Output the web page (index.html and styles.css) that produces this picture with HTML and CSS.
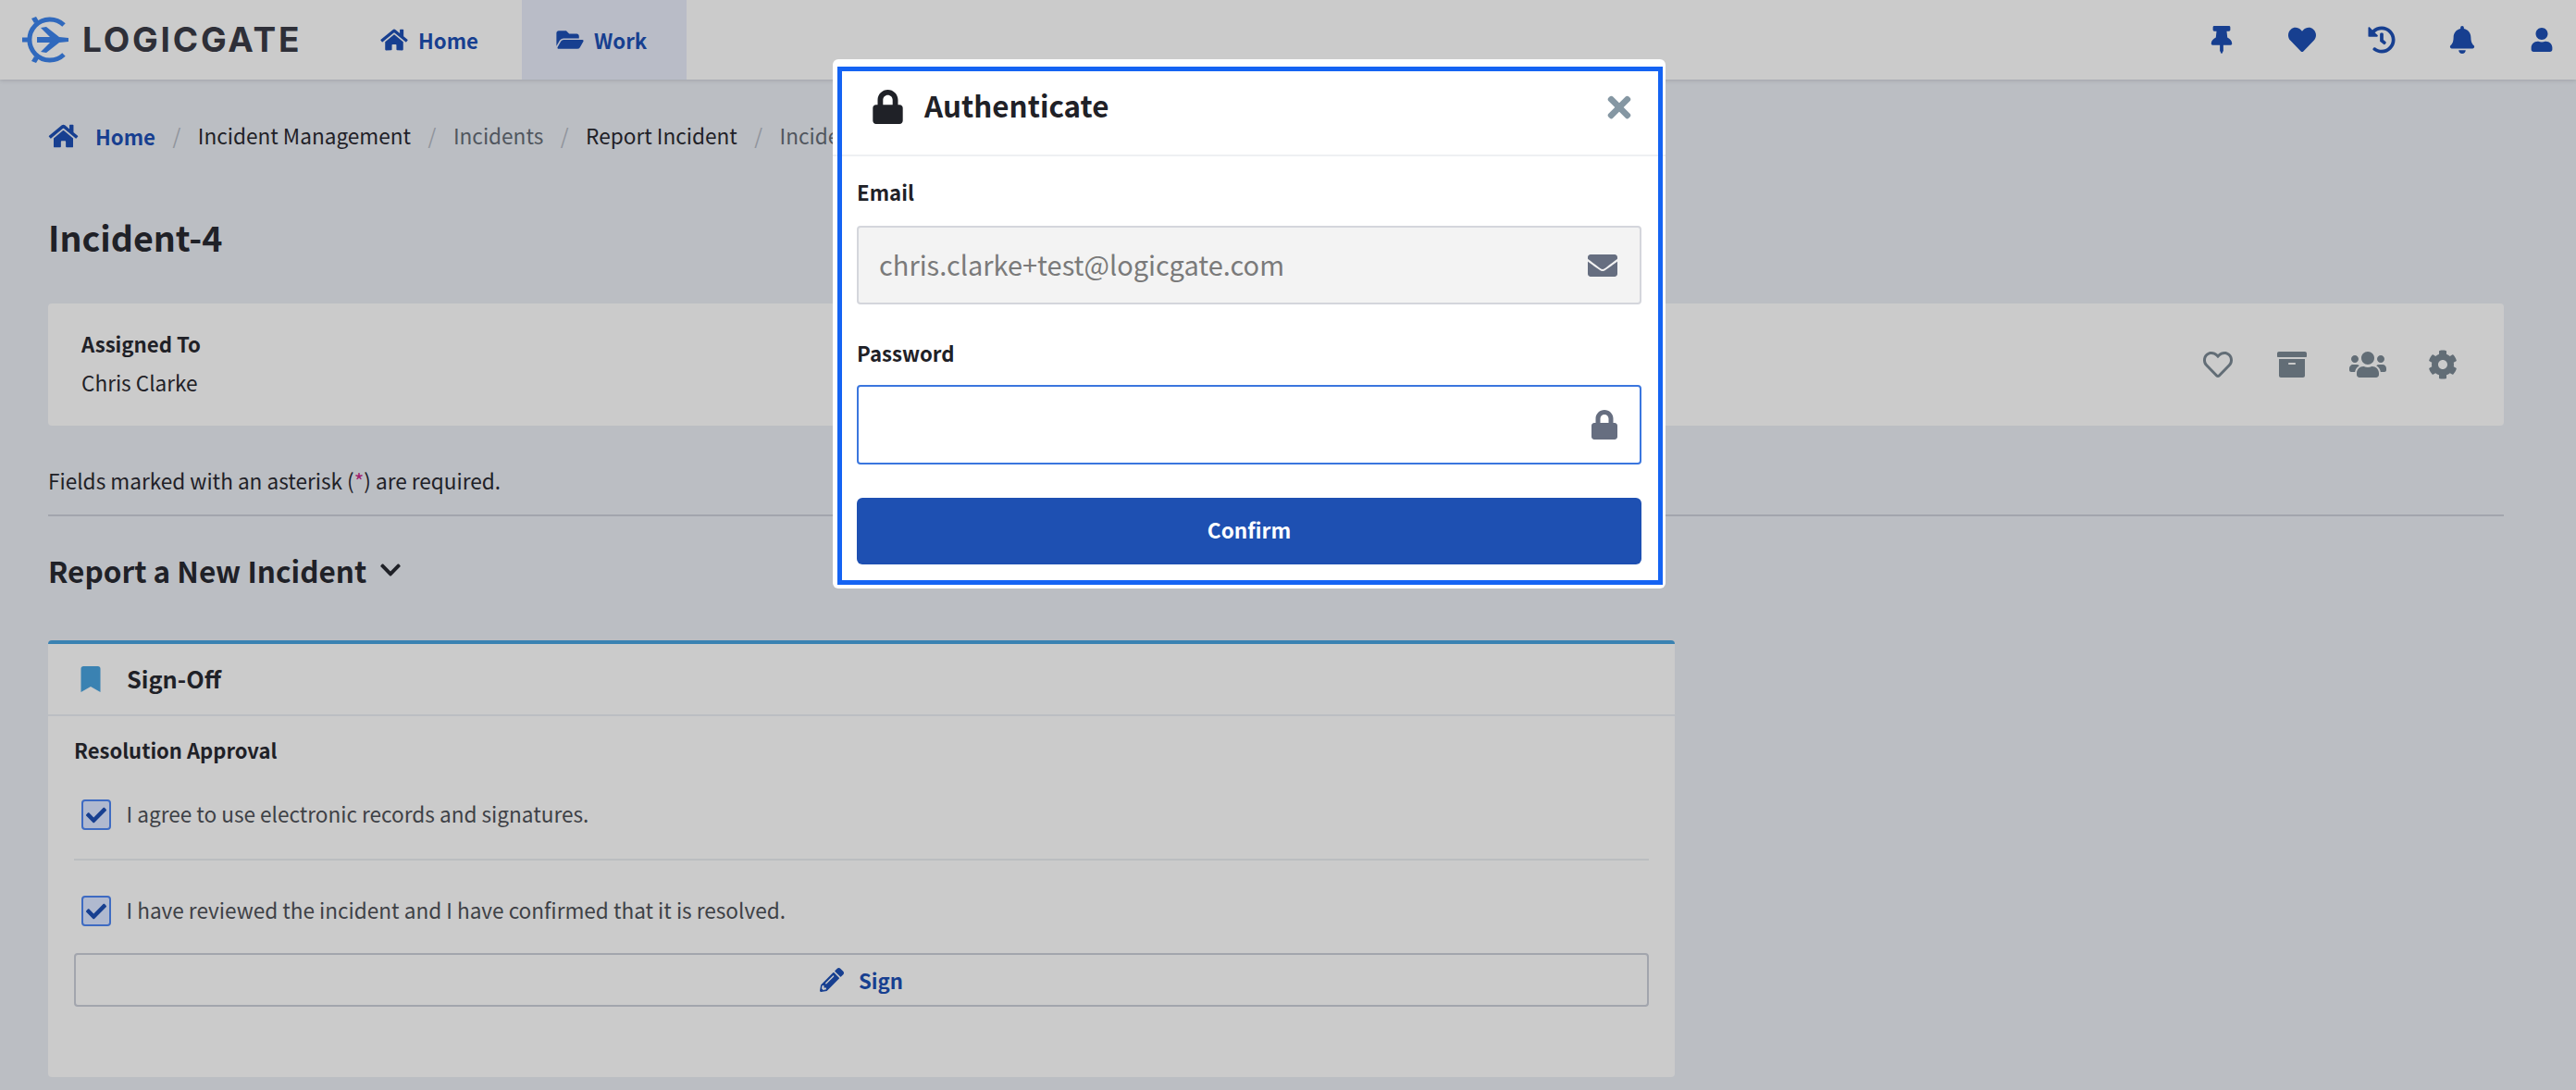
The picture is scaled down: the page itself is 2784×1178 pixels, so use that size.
FILE: index.html
```html
<!DOCTYPE html>
<html lang="en">
<head>
<meta charset="utf-8">
<title>Authenticate</title>
<link rel="stylesheet" href="styles.css">
</head>
<body>
<svg class="defs" aria-hidden="true">
  <symbol id="i-home" viewBox="0 0 576 512"><path d="M280.37 148.26L96 300.11V464a16 16 0 0 0 16 16l112.06-.29a16 16 0 0 0 15.92-16V368a16 16 0 0 1 16-16h64a16 16 0 0 1 16 16v95.64a16 16 0 0 0 16 16.05L464 480a16 16 0 0 0 16-16V300L295.67 148.26a12.19 12.19 0 0 0-15.3 0zM571.6 251.47L488 182.56V44.05a12 12 0 0 0-12-12h-56a12 12 0 0 0-12 12v72.61L318.47 43a48 48 0 0 0-61 0L4.34 251.47a12 12 0 0 0-1.6 16.9l25.5 31A12 12 0 0 0 45.15 301l235.22-193.74a12.19 12.19 0 0 1 15.3 0L530.9 301a12 12 0 0 0 16.9-1.6l25.5-31a12 12 0 0 0-1.7-16.93z"/></symbol>
  <symbol id="i-folder" viewBox="0 0 576 512"><path d="M572.694 292.093L500.27 416.248A63.997 63.997 0 0 1 444.989 448H45.025c-18.523 0-30.064-20.093-20.731-36.093l72.424-124.155A64 64 0 0 1 152 256h399.964c18.523 0 30.064 20.093 20.73 36.093zM152 224h328v-48c0-26.51-21.49-48-48-48H272l-64-64H48C21.49 64 0 85.49 0 112v278.046l69.077-118.418C86.214 242.25 117.989 224 152 224z"/></symbol>
  <symbol id="i-pin" viewBox="0 0 384 512"><path d="M298.028 214.267L285.793 96H328c13.255 0 24-10.745 24-24V24c0-13.255-10.745-24-24-24H56C42.745 0 32 10.745 32 24v48c0 13.255 10.745 24 24 24h42.207L85.972 214.267C37.465 236.82 0 277.261 0 328c0 13.255 10.745 24 24 24h136v104.007c0 1.242.289 2.467.845 3.578l24 48c2.941 5.882 11.364 5.893 14.311 0l24-48a8.008 8.008 0 0 0 .845-3.578V352h136c13.255 0 24-10.745 24-24-.001-51.183-37.983-91.42-85.973-113.733z"/></symbol>
  <symbol id="i-heart" viewBox="0 0 512 512"><path d="M462.3 62.6C407.5 15.9 326 24.3 275.7 76.2L256 96.5l-19.7-20.3C186.1 24.3 104.5 15.9 49.7 62.6c-62.8 53.6-66.1 149.8-9.9 207.9l193.5 199.8c12.5 12.9 32.8 12.9 45.3 0l193.5-199.8c56.3-58.1 53-154.3-9.8-207.9z"/></symbol>
  <symbol id="i-heart-o" viewBox="0 0 512 512"><path d="M458.4 64.3C400.6 15.7 311.3 23 256 79.3 200.7 23 111.4 15.6 53.6 64.3-21.6 127.6-10.6 230.8 43 285.5l175.4 178.7c10 10.2 23.4 15.9 37.6 15.9 14.3 0 27.6-5.6 37.6-15.8L469 285.6c53.5-54.7 64.7-157.9-10.6-221.3zm-23.6 187.5L259.4 430.5c-2.4 2.4-4.4 2.4-6.8 0L77.2 251.8c-36.5-37.2-43.9-107.6 7.3-150.7 38.9-32.7 98.9-27.8 136.5 10.5l35 35.7 35-35.7c37.8-38.5 97.8-43.2 136.5-10.6 51.1 43.1 43.5 113.9 7.3 150.8z"/></symbol>
  <symbol id="i-history" viewBox="0 0 512 512"><path d="M504 255.531c.253 136.64-111.18 248.372-247.82 248.468-59.015.042-113.223-20.53-155.822-54.911-11.077-8.94-11.905-25.541-1.839-35.607l11.267-11.267c8.609-8.609 22.353-9.551 31.891-1.984C173.062 425.135 212.781 440 256 440c101.705 0 184-82.311 184-184 0-101.705-82.311-184-184-184-48.814 0-93.149 18.969-126.068 49.932l50.754 50.754c10.08 10.08 2.941 27.314-11.313 27.314H24c-8.837 0-16-7.163-16-16V38.627c0-14.254 17.234-21.393 27.314-11.314l49.372 49.372C129.209 34.136 189.552 8 256 8c136.81 0 247.747 110.78 248 247.531zm-180.912 78.784l9.823-12.63c8.138-10.463 6.253-25.542-4.21-33.679L288 256.349V152c0-13.255-10.745-24-24-24h-16c-13.255 0-24 10.745-24 24v135.651l65.409 50.874c10.463 8.137 25.541 6.253 33.679-4.21z"/></symbol>
  <symbol id="i-bell" viewBox="0 0 448 512"><path d="M224 512c35.32 0 63.97-28.65 63.97-64H160.03c0 35.35 28.65 64 63.97 64zm215.39-149.71c-19.32-20.76-55.47-51.99-55.47-154.29 0-77.7-54.48-139.9-127.94-155.16V32c0-17.67-14.32-32-31.98-32s-31.98 14.33-31.98 32v20.84C118.56 68.1 64.08 130.3 64.08 208c0 102.3-36.15 133.53-55.47 154.29-6 6.45-8.66 14.16-8.61 21.71.11 16.4 12.98 32 32.1 32h383.8c19.12 0 32-15.6 32.1-32 .05-7.55-2.61-15.27-8.61-21.71z"/></symbol>
  <symbol id="i-user" viewBox="0 0 448 512"><path d="M224 256c70.7 0 128-57.3 128-128S294.7 0 224 0 96 57.3 96 128s57.3 128 128 128zm89.6 32h-16.7c-22.2 10.2-46.9 16-72.9 16s-50.6-5.8-72.9-16h-16.7C60.2 288 0 348.2 0 422.4V464c0 26.5 21.5 48 48 48h352c26.5 0 48-21.5 48-48v-41.6c0-74.2-60.2-134.4-134.4-134.4z"/></symbol>
  <symbol id="i-archive" viewBox="0 0 512 512"><path d="M32 448c0 17.7 14.3 32 32 32h384c17.7 0 32-14.3 32-32V160H32v288zm160-212c0-6.6 5.4-12 12-12h104c6.6 0 12 5.4 12 12v8c0 6.6-5.4 12-12 12H204c-6.6 0-12-5.4-12-12v-8zM480 32H32C14.3 32 0 46.3 0 64v48c0 8.8 7.2 16 16 16h480c8.8 0 16-7.2 16-16V64c0-17.7-14.3-32-32-32z"/></symbol>
  <symbol id="i-users" viewBox="0 0 640 512"><path d="M96 224c35.3 0 64-28.7 64-64s-28.7-64-64-64-64 28.7-64 64 28.7 64 64 64zm448 0c35.3 0 64-28.7 64-64s-28.7-64-64-64-64 28.7-64 64 28.7 64 64 64zm32 32h-64c-17.6 0-33.5 7.1-45.1 18.6 40.3 22.1 68.9 62 75.1 109.4h66c17.7 0 32-14.3 32-32v-32c0-35.3-28.7-64-64-64zm-256 0c61.9 0 112-50.1 112-112S381.9 32 320 32 208 82.1 208 144s50.1 112 112 112zm76.8 32h-8.3c-20.8 10-43.9 16-68.5 16s-47.6-6-68.5-16h-8.3C179.6 288 128 339.6 128 403.2V432c0 26.5 21.5 48 48 48h288c26.5 0 48-21.5 48-48v-28.8c0-63.6-51.6-115.2-115.2-115.2zm-223.7-13.4C161.5 263.1 145.6 256 128 256H64c-35.3 0-64 28.7-64 64v32c0 17.7 14.3 32 32 32h65.9c6.3-47.4 34.9-87.3 75.2-109.4z"/></symbol>
  <symbol id="i-cog" viewBox="0 0 512 512"><path d="M487.4 315.7l-42.6-24.6c4.3-23.2 4.3-47 0-70.2l42.6-24.6c4.9-2.8 7.1-8.6 5.5-14-11.1-35.6-30-67.8-54.7-94.6-3.8-4.1-10-5.1-14.8-2.3L380.8 110c-17.9-15.4-38.5-27.3-60.8-35.1V25.8c0-5.6-3.9-10.5-9.4-11.7-36.7-8.2-74.3-7.8-109.2 0-5.5 1.2-9.4 6.1-9.4 11.7V75c-22.2 7.9-42.8 19.8-60.8 35.1L88.7 85.5c-4.9-2.8-11-1.9-14.8 2.3-24.7 26.7-43.6 58.9-54.7 94.6-1.7 5.4.6 11.2 5.5 14L67.3 221c-4.3 23.2-4.3 47 0 70.2l-42.6 24.6c-4.9 2.8-7.1 8.6-5.5 14 11.1 35.6 30 67.8 54.7 94.6 3.8 4.1 10 5.1 14.8 2.3l42.6-24.6c17.9 15.4 38.5 27.3 60.8 35.1v49.2c0 5.6 3.9 10.5 9.4 11.7 36.7 8.2 74.3 7.8 109.2 0 5.5-1.2 9.4-6.1 9.4-11.7v-49.2c22.2-7.9 42.8-19.8 60.8-35.1l42.6 24.6c4.9 2.8 11 1.9 14.8-2.3 24.7-26.7 43.6-58.9 54.7-94.6 1.5-5.5-.7-11.3-5.6-14.1zM256 336c-44.1 0-80-35.9-80-80s35.9-80 80-80 80 35.9 80 80-35.9 80-80 80z"/></symbol>
  <symbol id="i-lock" viewBox="0 0 448 512"><path d="M400 224h-24v-72C376 68.2 307.8 0 224 0S72 68.2 72 152v72H48c-26.5 0-48 21.5-48 48v192c0 26.5 21.5 48 48 48h352c26.5 0 48-21.5 48-48V272c0-26.5-21.5-48-48-48zm-104 0H152v-72c0-39.7 32.3-72 72-72s72 32.3 72 72v72z"/></symbol>
  <symbol id="i-envelope" viewBox="0 0 512 512"><path d="M502.3 190.8c3.9-3.1 9.7-.2 9.7 4.7V400c0 26.5-21.5 48-48 48H48c-26.5 0-48-21.5-48-48V195.6c0-5 5.7-7.8 9.7-4.7 22.4 17.4 52.1 39.5 154.1 113.6 21.1 15.4 56.7 47.8 92.2 47.6 35.7.3 72-32.8 92.3-47.6 102-74.1 131.6-96.3 154-113.7zM256 320c23.2.4 56.6-29.2 73.4-41.4 132.7-96.3 142.8-104.7 173.4-128.7 5.8-4.5 9.2-11.5 9.2-18.9v-19c0-26.5-21.5-48-48-48H48C21.5 64 0 85.5 0 112v19c0 7.4 3.4 14.3 9.2 18.9 30.6 23.9 40.7 32.4 173.4 128.7 16.8 12.2 50.2 41.8 73.4 41.4z"/></symbol>
  <symbol id="i-times" viewBox="0 0 352 512"><path d="M242.72 256l100.07-100.07c12.28-12.28 12.28-32.19 0-44.48l-22.24-22.24c-12.28-12.28-32.19-12.28-44.48 0L176 189.28 75.93 89.21c-12.28-12.28-32.19-12.28-44.48 0L9.21 111.45c-12.28 12.28-12.28 32.19 0 44.48L109.28 256 9.21 356.07c-12.28 12.28-12.28 32.19 0 44.48l22.24 22.24c12.28 12.28 32.2 12.28 44.48 0L176 322.72l100.07 100.07c12.28 12.28 32.2 12.28 44.48 0l22.24-22.24c12.28-12.28 12.28-32.19 0-44.48L242.72 256z"/></symbol>
  <symbol id="i-chevron" viewBox="0 0 448 512"><path d="M207.029 381.476L12.686 187.132c-9.373-9.373-9.373-24.569 0-33.941l22.667-22.667c9.357-9.357 24.522-9.375 33.901-.04L224 284.505l154.745-154.021c9.379-9.335 24.544-9.317 33.901.04l22.667 22.667c9.373 9.373 9.373 24.569 0 33.941L240.971 381.476c-9.373 9.372-24.569 9.372-33.942 0z"/></symbol>
  <symbol id="i-bookmark" viewBox="0 0 384 512"><path d="M0 512V48C0 21.49 21.49 0 48 0h288c26.51 0 48 21.49 48 48v464L192 400 0 512z"/></symbol>
  <symbol id="i-check" viewBox="0 0 512 512"><path d="M173.898 439.404l-166.4-166.4c-9.997-9.997-9.997-26.206 0-36.204l36.203-36.204c9.997-9.998 26.207-9.998 36.204 0L192 312.69 432.095 72.596c9.997-9.997 26.207-9.997 36.204 0l36.203 36.204c9.997 9.997 9.997 26.206 0 36.204l-294.4 294.401c-9.998 9.997-26.207 9.997-36.204-.001z"/></symbol>
  <symbol id="i-pencil" viewBox="0 0 512 512"><path d="M497.9 142.1l-46.1 46.1c-4.7 4.7-12.3 4.7-17 0l-111-111c-4.7-4.7-4.7-12.3 0-17l46.1-46.1c18.7-18.7 49.1-18.7 67.9 0l60.1 60.1c18.8 18.7 18.8 49.1 0 67.9zM284.2 99.8L21.6 362.4.4 483.9c-2.9 16.4 11.4 30.6 27.8 27.8l121.5-21.3 262.6-262.6c4.7-4.7 4.7-12.3 0-17l-111-111c-4.8-4.7-12.4-4.7-17.1 0zM124.1 339.9c-5.5-5.5-5.5-14.3 0-19.8l154-154c5.5-5.5 14.3-5.5 19.8 0s5.5 14.3 0 19.8l-154 154c-5.5 5.5-14.3 5.5-19.8 0zM88 424h48v36.3l-64.5 11.3-31.1-31.1L51.7 376H88v48z"/></symbol>
</svg>

<header class="navbar">
  <div class="logo">
    <svg class="logo-mark" viewBox="0 0 50 50" aria-hidden="true">
      <path class="logo-ring" d="M45 9A22 22 0 1 0 45 41"/>
      <path class="logo-fill" d="M0 22.5h6v5H0zM10 2l5-2 3 5-5 2zM10 48l5 2 3-5-5-2z"/>
      <path class="logo-fill" d="M16 22h14L20 12l6-1 14 11 10 1v4l-10 1-14 11-6-1 10-10H16z"/>
    </svg>
    <span class="logo-text">LOGICGATE</span>
  </div>
  <nav class="tabs">
    <a class="tab tab-home"><svg class="tab-icon"><use href="#i-home"/></svg>Home</a>
    <a class="tab tab-active"><svg class="tab-icon"><use href="#i-folder"/></svg>Work</a>
  </nav>
  <div class="nav-icons">
    <svg class="nav-icon"><use href="#i-pin"/></svg>
    <svg class="nav-icon"><use href="#i-heart"/></svg>
    <svg class="nav-icon"><use href="#i-history"/></svg>
    <svg class="nav-icon"><use href="#i-bell"/></svg>
    <svg class="nav-icon nav-user"><use href="#i-user"/></svg>
  </div>
</header>

<main class="page">
  <ol class="crumbs">
    <li class="crumb crumb-home"><svg class="crumb-icon"><use href="#i-home"/></svg>Home</li>
    <li class="crumb">Incident Management</li>
    <li class="crumb crumb-muted">Incidents</li>
    <li class="crumb">Report Incident</li>
    <li class="crumb crumb-muted">Incident-4</li>
  </ol>

  <h1 class="title">Incident-4</h1>

  <section class="summary">
    <div class="summary-info">
      <div class="summary-label">Assigned To</div>
      <div class="summary-value">Chris Clarke</div>
    </div>
    <div class="actions">
      <svg class="action a-heart"><use href="#i-heart-o"/></svg>
      <svg class="action a-archive"><use href="#i-archive"/></svg>
      <svg class="action a-users"><use href="#i-users"/></svg>
      <svg class="action a-cog"><use href="#i-cog"/></svg>
    </div>
  </section>

  <p class="required">Fields marked with an asterisk (<span class="star">*</span>) are required.</p>
  <hr class="rule">

  <h2 class="section-title">Report a New Incident<svg class="chevron"><use href="#i-chevron"/></svg></h2>

  <section class="panel">
    <div class="panel-head">
      <svg class="bookmark"><use href="#i-bookmark"/></svg>
      <span class="panel-title">Sign-Off</span>
    </div>
    <div class="panel-body">
      <div class="field-title">Resolution Approval</div>
      <div class="check-row check-first">
        <span class="box"><svg class="tick"><use href="#i-check"/></svg></span>
        <span class="check-text">I agree to use electronic records and signatures.</span>
      </div>
      <hr class="row-rule">
      <div class="check-row check-second">
        <span class="box"><svg class="tick"><use href="#i-check"/></svg></span>
        <span class="check-text">I have reviewed the incident and I have confirmed that it is resolved.</span>
      </div>
      <button class="sign" type="button"><svg class="sign-icon"><use href="#i-pencil"/></svg>Sign</button>
    </div>
  </section>
</main>

<div class="modal" role="dialog">
  <div class="modal-head">
    <svg class="modal-lock"><use href="#i-lock"/></svg>
    <span class="modal-title">Authenticate</span>
    <svg class="modal-close"><use href="#i-times"/></svg>
  </div>
  <form class="modal-body">
    <label class="label label-email">Email</label>
    <div class="input input-disabled">
      <input class="input-el" type="text" value="chris.clarke+test@logicgate.com" readonly>
      <svg class="input-icon icon-mail"><use href="#i-envelope"/></svg>
    </div>
    <label class="label label-pass">Password</label>
    <div class="input input-focus">
      <input class="input-el" type="password">
      <svg class="input-icon icon-lock"><use href="#i-lock"/></svg>
    </div>
    <button class="confirm" type="button">Confirm</button>
  </form>
  <div class="modal-ring"></div>
</div>
</body>
</html>
```

FILE: styles.css
```css
* { box-sizing: border-box; }
html, body { margin: 0; height: 100%; }
body {
  position: relative;
  overflow: hidden;
  background: #bbbec3;
  color: #1f2127;
  font-family: "Noto Sans CJK SC", "Noto Sans", sans-serif;
  font-size: 22.6px;
  line-height: 36px;
}
.defs { display: none; }
svg { display: block; fill: currentColor; flex: none; }

/* navbar */
.navbar {
  display: flex;
  align-items: stretch;
  height: 86px;
  background: #cbcbcb;
  box-shadow: 0 1px 4px rgba(80, 85, 95, .25);
  color: #173f90;
}
.logo { display: flex; align-items: center; width: 371px; padding-left: 24px; }
.logo-mark { width: 50px; height: 50px; }
.logo-ring { fill: none; stroke: #3069bd; stroke-width: 5; }
.logo-fill { fill: #3069bd; }
.logo-text {
  margin-left: 15px;
  color: #2e2f38;
  font-family: "Inter", sans-serif;
  font-size: 37px;
  font-weight: 700;
  letter-spacing: 2.8px;
  line-height: 50px;
}
.tabs { display: flex; }
.tab { display: flex; align-items: center; font-size: 22.2px; font-weight: 600; }
.tab-home { padding: 0 40px; width: 193px; }
.tab-active { padding-left: 37px; width: 178px; background: #b9bcc7; }
.tab-icon { width: 30px; height: 26px; margin-right: 11px; }
.nav-icons { display: flex; align-items: center; margin-left: auto; padding-right: 22px; gap: 56.5px; }
.nav-icon { width: 30px; height: 30px; }
.nav-user { height: 26px; }

/* page */
.page { padding: 43px 78px 0 52px; }
.crumbs { display: flex; margin: 0; padding: 0; list-style: none; }
.crumb { display: flex; align-items: center; white-space: nowrap; }
.crumb + .crumb::before {
  content: "/";
  margin: 0 18.5px;
  color: #90949c;
}
.crumb-home { color: #173f90; font-size: 22.2px; font-weight: 600; }
.crumb-icon { width: 33px; height: 28px; margin-right: 18px; }
.crumb-muted { color: #50565e; }

.title { margin: 66px 0 47px; font-size: 37.6px; line-height: 50px; font-weight: 600; }

.summary {
  display: flex;
  align-items: center;
  justify-content: space-between;
  height: 132px;
  padding: 0 50px 0 36px;
  border-radius: 4px;
  background: #cbcbcb;
}
.summary-info { padding-bottom: 4px; }
.summary-label { font-size: 22.2px; font-weight: 600; line-height: 36px; margin-bottom: 7px; }
.summary-value { line-height: 36px; }
.actions { display: flex; align-items: center; color: #626d76; }
.action { height: 32px; }
.a-heart { width: 32px; margin-right: 48px; }
.a-archive { width: 32px; margin-right: 46px; }
.a-users { width: 40px; margin-right: 45px; }
.a-cog { width: 32px; }

.required { margin: 42px 0 18px; }
.star { color: #a0206e; }
.rule { height: 2px; margin: 0; border: 0; background: #a2a5ad; }

.section-title {
  display: flex;
  align-items: center;
  margin: 35px 0 53px;
  font-size: 31.5px;
  line-height: 46px;
  font-weight: 600;
}
.chevron { width: 22px; height: 26px; margin-left: 15px; }

.panel {
  width: 1758px;
  height: 472px;
  border-top: 4px solid #3a82b2;
  border-radius: 4px;
  background: #cbcbcb;
}
.panel-head {
  display: flex;
  align-items: center;
  height: 78px;
  padding-left: 35px;
  border-bottom: 2px solid #bbbec3;
  font-size: 25.3px;
  font-weight: 600;
}
.panel-title { margin-bottom: 3px; }
.bookmark { width: 22px; height: 28px; margin-right: 28px; color: #3a82b2; }
.panel-body { padding: 18px 28px 0; }
.field-title { font-size: 22px; font-weight: 600; }
.check-row { display: flex; align-items: center; height: 33px; color: #3e4146; }
.check-first { margin-top: 36px; }
.check-second { margin-top: 38px; }
.check-text { margin-top: -2px; }
.box {
  display: flex;
  align-items: center;
  justify-content: center;
  width: 32px;
  height: 33px;
  margin: 0 16.5px 0 8px;
  border: 2px solid #3e6bc2;
  border-radius: 4px;
  background: #b0b9cf;
}
.tick { width: 22px; height: 22px; color: #173f90; }
.row-rule { height: 2px; margin: 31px 0 0; border: 0; background: #bbbec0; }
.sign {
  display: flex;
  align-items: center;
  justify-content: center;
  width: 100%;
  height: 58px;
  margin-top: 29px;
  padding: 0;
  border: 2px solid #a2a5ad;
  border-radius: 4px;
  background: transparent;
  color: #173f90;
  font: inherit;
  font-size: 22.2px;
  font-weight: 600;
}
.sign-icon { width: 26px; height: 26px; margin-right: 16px; }

/* modal */
.modal {
  position: absolute;
  left: 900px;
  top: 64px;
  width: 900px;
  height: 572px;
  border-radius: 6px;
  background: #fff;
}
.modal-ring {
  position: absolute;
  inset: 8px 3px 4px 5px;
  border: 5px solid #1463f3;
  pointer-events: none;
}
.modal-head {
  display: flex;
  align-items: center;
  height: 105px;
  padding: 0 37px 0 43px;
  border-bottom: 2px solid #eef0f3;
}
.modal-lock { width: 33px; height: 37px; color: #1f2127; }
.modal-title { margin: 0 0 3px 23px; font-size: 31.4px; line-height: 46px; font-weight: 600; }
.modal-close { width: 26px; height: 36px; margin-left: auto; color: #8597a3; }
.modal-body { padding: 20px 26px 0; }
.label { display: block; font-size: 22.2px; font-weight: 600; }
.label-email { margin-bottom: 19px; }
.label-pass { margin: 34px 0 17px; }
.input {
  display: flex;
  align-items: center;
  height: 86px;
  padding: 0 24px 0 22px;
  border: 2px solid #d4d6dc;
  border-radius: 4px;
  color: #666e80;
}
.input-disabled { height: 85px; background: #f3f3f3; }
.input-focus { border-color: #3b76de; background: #fff; }
.input-el {
  flex: 1;
  min-width: 0;
  height: 100%;
  padding: 0 0 3px;
  border: 0;
  outline: 0;
  background: transparent;
  color: #7a7a7a;
  font: inherit;
  font-size: 29px;
}
.icon-mail { width: 32px; height: 32px; }
.icon-lock { width: 28px; height: 34px; }
.confirm {
  display: block;
  width: 100%;
  height: 72px;
  margin-top: 36px;
  padding: 0 0 2px;
  border: 0;
  border-radius: 6px;
  background: #1e50b2;
  color: #fff;
  font: inherit;
  font-weight: 700;
}
```
